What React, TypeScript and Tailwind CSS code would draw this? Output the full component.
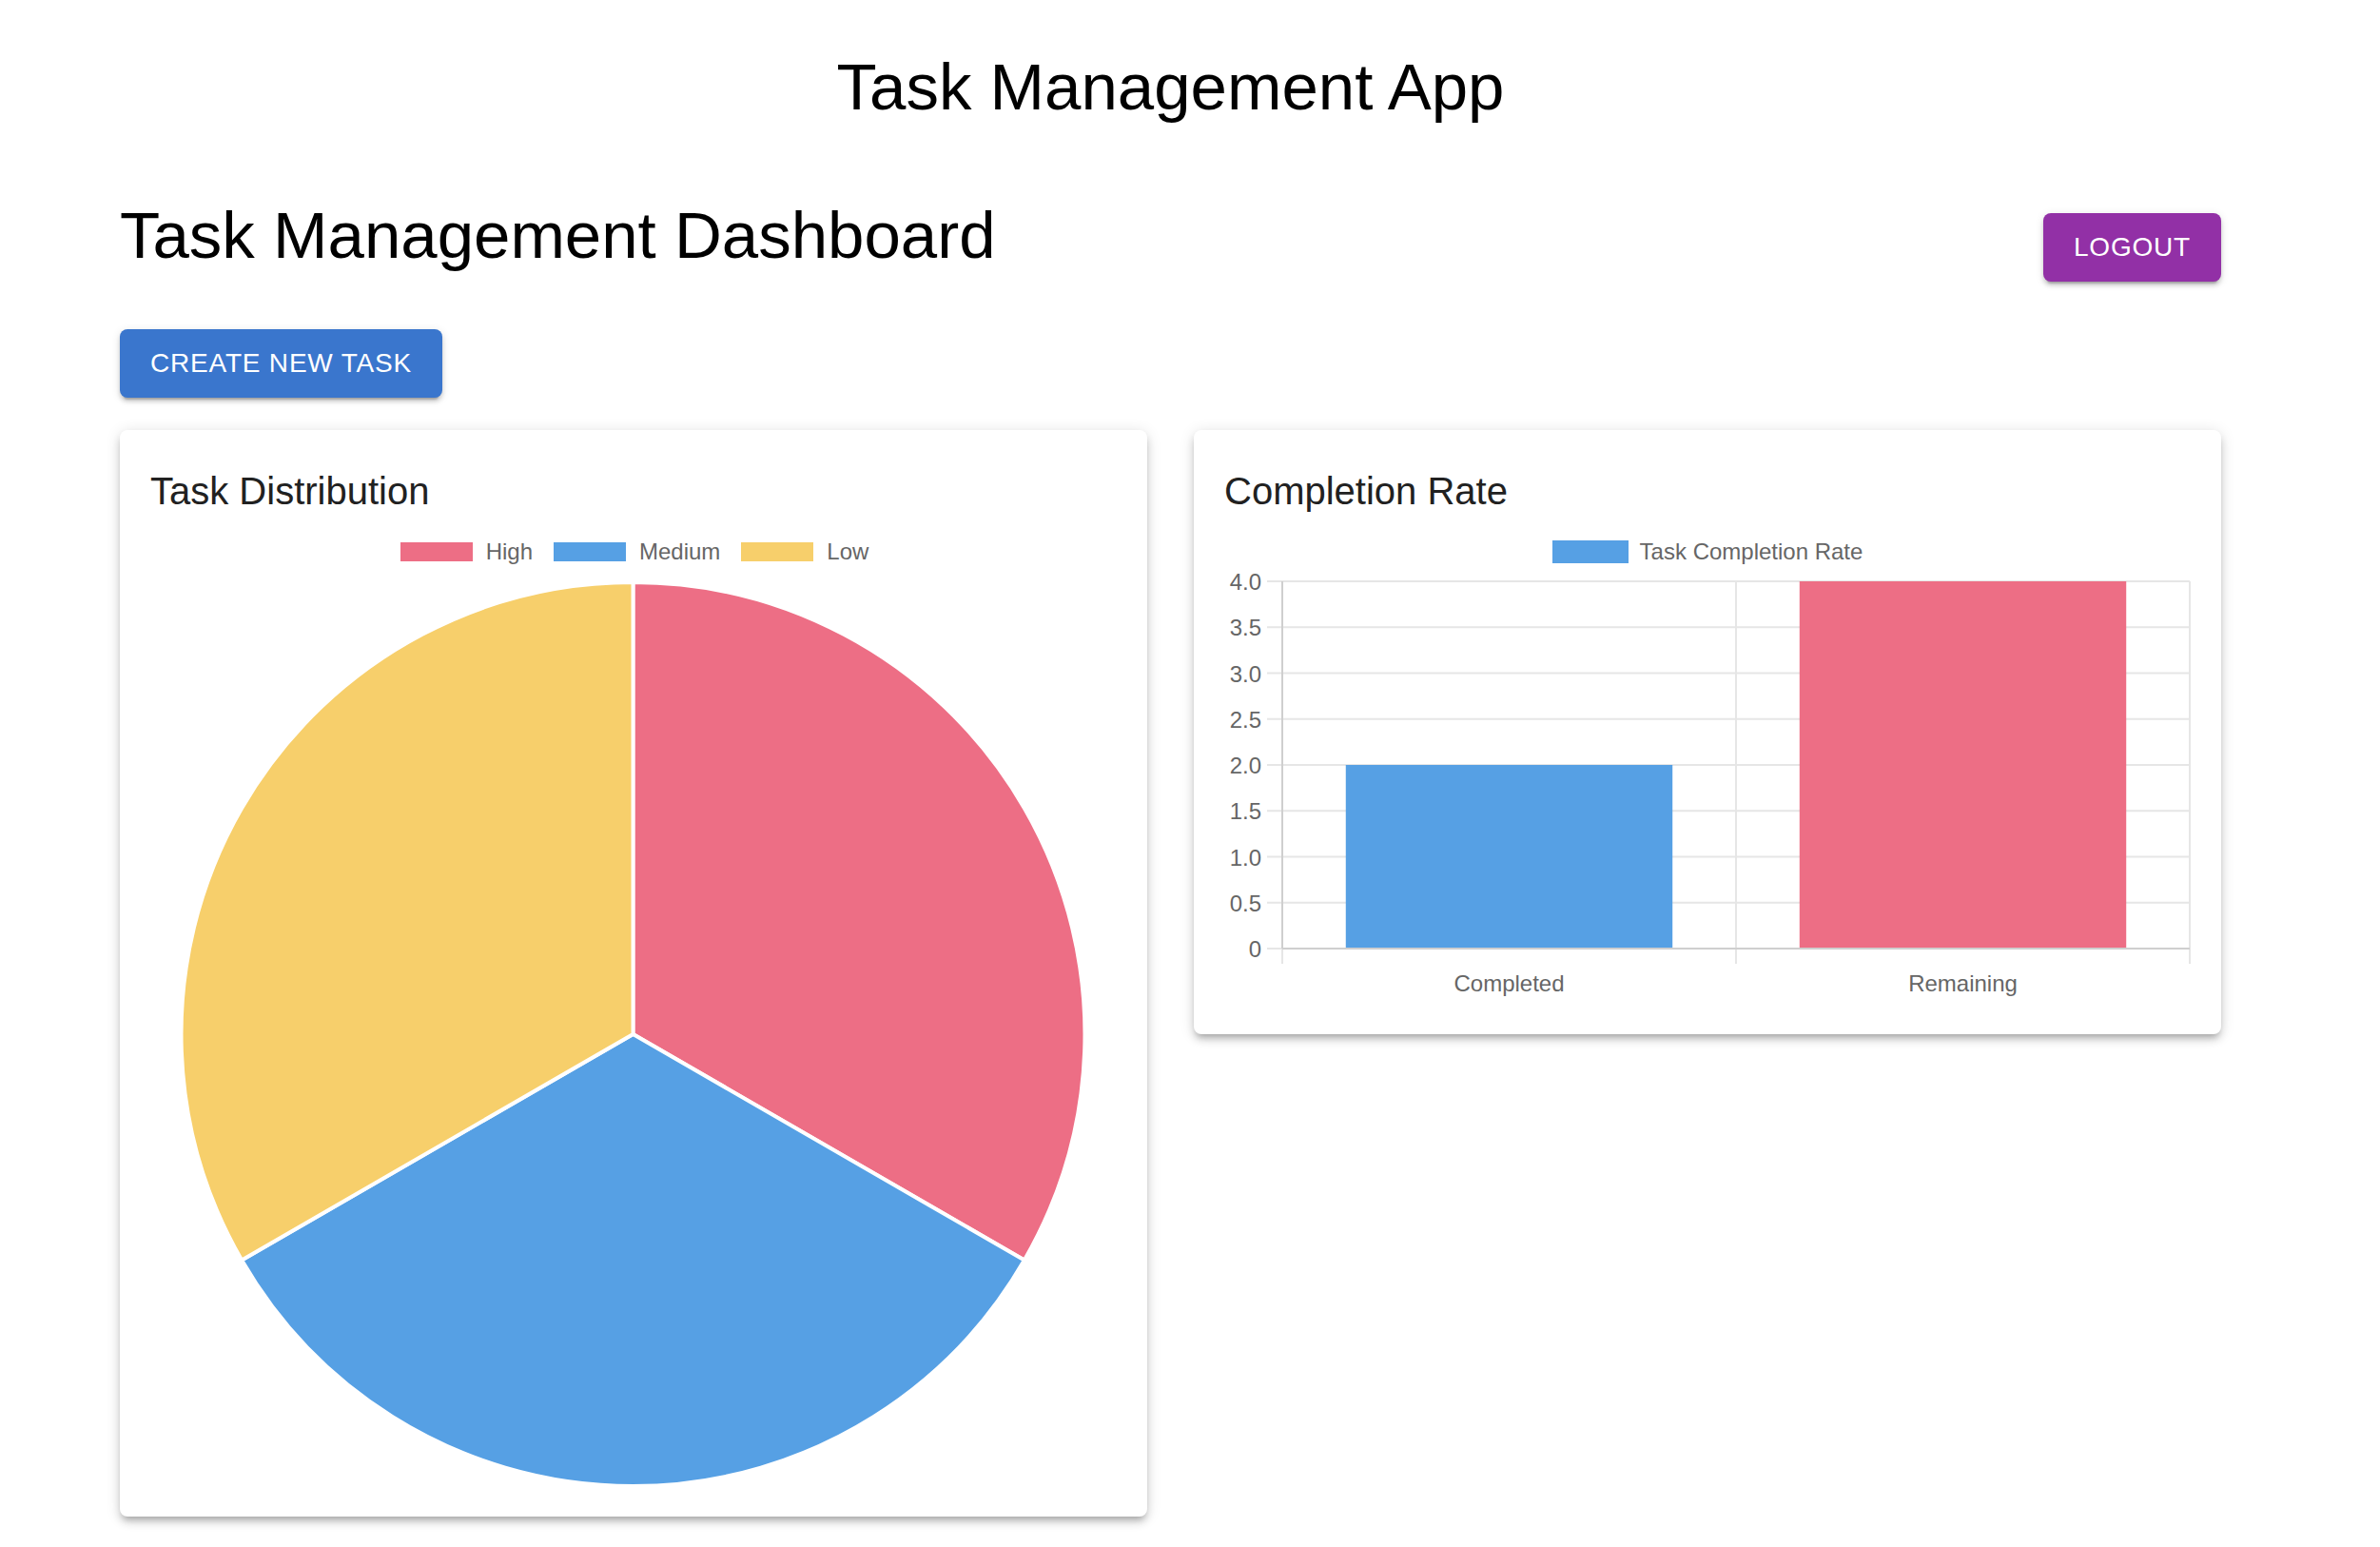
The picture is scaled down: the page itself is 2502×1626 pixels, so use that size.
import React from 'react';

const RED = '#ed6e85';
const BLUE = '#56a0e4';
const YELLOW = '#f7cf6b';

interface Slice {
  label: string;
  value: number;
  color: string;
}

const priorities: Slice[] = [
  { label: 'High', value: 1, color: RED },
  { label: 'Medium', value: 1, color: BLUE },
  { label: 'Low', value: 1, color: YELLOW },
];

const completion = [
  { label: 'Completed', value: 2, color: BLUE },
  { label: 'Remaining', value: 4, color: RED },
];

const LegendItem: React.FC<{ color: string; label: string; inset?: boolean }> = ({ color, label, inset }) => (
  <div className="flex items-center gap-[12px]">
    <span className={inset ? 'w-[80px] h-[24px] border-[2px] border-white' : 'w-[80px] h-[24px]'} style={{ backgroundColor: color }} />
    <span className="text-[24px] leading-[24px] text-[#666666]">{label}</span>
  </div>
);

const PieChart: React.FC = () => {
  const cx = 507.5;
  const cy = 495;
  const r = 475;
  const total = priorities.reduce((s, p) => s + p.value, 0);
  let start = 0;

  const point = (deg: number) => {
    const rad = (deg * Math.PI) / 180;
    return [cx + r * Math.sin(rad), cy - r * Math.cos(rad)];
  };

  return (
    <svg width="1015" height="970" viewBox="0 0 1015 970" className="block">
      {priorities.map((p) => {
        const sweep = (p.value / total) * 360;
        const [x0, y0] = point(start);
        const [x1, y1] = point(start + sweep);
        start += sweep;
        const large = sweep > 180 ? 1 : 0;
        return (
          <path
            key={p.label}
            d={`M ${cx} ${cy} L ${x0} ${y0} A ${r} ${r} 0 ${large} 1 ${x1} ${y1} Z`}
            fill={p.color}
            stroke="#ffffff"
            strokeWidth={4}
            strokeLinejoin="bevel"
          />
        );
      })}
    </svg>
  );
};

const BarChart: React.FC = () => {
  const left = 61;
  const right = 1015;
  const top = 19;
  const bottom = 405;
  const max = 4;
  const light = '#e6e6e6';
  const dark = '#cfcfcf';
  const ticks = [4, 3.5, 3, 2.5, 2, 1.5, 1, 0.5, 0];
  const catW = (right - left) / completion.length;
  const y = (v: number) => bottom - (v / max) * (bottom - top);

  return (
    <svg width="1017" height="463" viewBox="0 0 1017 463" className="block">
      {/* horizontal grid */}
      {ticks.map((t) => (
        <g key={t}>
          <line x1={45} x2={right} y1={y(t)} y2={y(t)} stroke={light} strokeWidth={2} />
          <text
            x={39}
            y={y(t) + 9}
            textAnchor="end"
            fontSize={24}
            fill="#666666"
            fontFamily="'Liberation Sans', Arial, sans-serif"
          >
            {t === 0 ? '0' : t.toFixed(1)}
          </text>
        </g>
      ))}

      {/* vertical grid */}
      {[left, left + catW, right].map((x) => (
        <line key={x} x1={x} x2={x} y1={top} y2={bottom + 16} stroke={light} strokeWidth={2} />
      ))}

      {completion.map((c, i) => {
        const w = catW * 0.72;
        const x = left + catW * i + (catW - w) / 2;
        return (
          <g key={c.label}>
            <rect x={x} y={y(c.value)} width={w} height={bottom - y(c.value)} fill={c.color} />
            <text
              x={left + catW * i + catW / 2}
              y={450}
              textAnchor="middle"
              fontSize={24}
              fill="#666666"
              fontFamily="'Liberation Sans', Arial, sans-serif"
            >
              {c.label}
            </text>
          </g>
        );
      })}

      {/* axis borders */}
      <line x1={left} x2={left} y1={top} y2={bottom} stroke={dark} strokeWidth={2} />
      <line x1={left} x2={right} y1={bottom} y2={bottom} stroke={dark} strokeWidth={2} />
    </svg>
  );
};

const cardClass =
  'bg-white rounded-[8px] p-[32px] shadow-[0_6px_6px_-4px_rgba(0,0,0,0.2),0_6px_8px_0_rgba(0,0,0,0.14),0_2px_16px_0_rgba(0,0,0,0.12)]';

const buttonShadow =
  'shadow-[0_6px_2px_-4px_rgba(0,0,0,0.2),0_4px_4px_0_rgba(0,0,0,0.14),0_2px_10px_0_rgba(0,0,0,0.12)]';

export default function App() {
  return (
    <div className="min-h-screen bg-white font-['Liberation_Sans',Arial,sans-serif]">
      <div className="ml-[126px] w-[2209px] pt-[52px] pb-[40px]">
        <h1 className="text-center text-[69px] leading-[80px] font-normal text-black">Task Management App</h1>

        {/* Header */}
        <div className="mt-[76px] flex items-center justify-between">
          <h2 className="text-[69px] leading-[80px] font-normal text-black mb-[24px]">Task Management Dashboard</h2>
          <button
            className={`h-[72px] px-[32px] rounded-[8px] bg-[#9230a6] text-white text-[28px] tracking-[0.8px] uppercase ${buttonShadow}`}
          >
            Logout
          </button>
        </div>

        <button
          className={`mt-[34px] h-[72px] px-[32px] rounded-[8px] bg-[#3a76cd] text-white text-[28px] tracking-[0.8px] uppercase ${buttonShadow}`}
        >
          Create New Task
        </button>

        {/* Charts */}
        <div className="mt-[34px] grid grid-cols-2 gap-[49px] items-start">
          <div className={cardClass}>
            <h3 className="text-[40px] leading-[64px] font-normal text-[#212121]">Task Distribution</h3>
            <div className="pt-[20px] flex justify-center gap-[20px]">
              {priorities.map((p) => (
                <LegendItem key={p.label} color={p.color} label={p.label} inset />
              ))}
            </div>
            <PieChart />
          </div>

          <div className={cardClass}>
            <h3 className="text-[40px] leading-[64px] font-normal text-[#212121]">Completion Rate</h3>
            <div className="pt-[20px] flex justify-center">
              <LegendItem color={BLUE} label="Task Completion Rate" />
            </div>
            <BarChart />
          </div>
        </div>
      </div>
    </div>
  );
}
